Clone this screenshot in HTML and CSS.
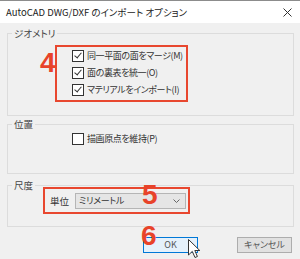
FILE: index.html
```html
<!DOCTYPE html>
<html lang="ja">
<head>
    <meta charset="UTF-8">
    <title>AutoCAD DWG/DXF のインポート オプション</title>
    <link rel="stylesheet" href="styles.css">
</head>
<body>
    <div class="titlebar">
        <span class="title">AutoCAD DWG/DXF のインポート オプション</span>
        <svg class="close" width="9" height="9" viewBox="0 0 9 9">
            <path d="M0.5 0.5 L8.5 8.5 M8.5 0.5 L0.5 8.5" stroke="#333" stroke-width="1"/>
        </svg>
    </div>

    <div class="main">
        <!-- Geometry -->
        <fieldset class="group group-geometry">
            <legend>ジオメトリ</legend>
            <div class="check-list">
                <label class="check"><span class="box checked"></span>同一平面の面をマージ(M)</label>
                <label class="check"><span class="box checked"></span>面の裏表を統一(O)</label>
                <label class="check"><span class="box checked"></span>マテリアルをインポート(I)</label>
            </div>
        </fieldset>

        <!-- Position -->
        <fieldset class="group group-position">
            <legend>位置</legend>
            <div class="check-list">
                <label class="check"><span class="box"></span>描画原点を維持(P)</label>
            </div>
        </fieldset>

        <!-- Scale -->
        <fieldset class="group group-scale">
            <legend>尺度</legend>
            <div class="unit-row">
                <span class="unit-label">単位</span>
                <div class="select">
                    <span>ミリメートル</span>
                    <svg width="7" height="4" viewBox="0 0 7 4">
                        <path d="M0.5 0.5 L3.5 3.5 L6.5 0.5" fill="none" stroke="#666" stroke-width="1"/>
                    </svg>
                </div>
            </div>
        </fieldset>

        <div class="buttons">
            <button class="btn btn-ok">OK</button>
            <button class="btn">キャンセル</button>
        </div>
    </div>

    <!-- annotations -->
    <div class="mark mark-box mark-box-1"></div>
    <div class="mark mark-num mark-num-4">4</div>
    <div class="mark mark-box mark-box-2"></div>
    <div class="mark mark-num mark-num-5">5</div>
    <div class="mark mark-num mark-num-6">6</div>

    <svg class="cursor" width="13" height="20" viewBox="0 0 13 20">
        <path d="M0.5 0.5 L0.5 16 L4.3 12.4 L7 18.5 L9.4 17.5 L6.8 11.5 L11.8 11.5 Z" fill="#fff" stroke="#333" stroke-width="1" stroke-linejoin="round"/>
    </svg>
</body>
</html>
```

FILE: styles.css
```css
body {
    margin: 0;
    width: 300px;
    height: 259px;
    overflow: hidden;
    position: relative;
    background-color: #f0f0f0;
    font-family: "Noto Sans CJK JP", "Liberation Sans", sans-serif;
    font-size: 9.5px;
    font-feature-settings: "palt";
    color: #333;
}
.titlebar {
    height: 22px;
    border-top: 1px solid #8c8c8c;
    background: #fff;
    display: flex;
    align-items: center;
    justify-content: space-between;
    padding: 0 8px 0 6px;
}
.title {
    font-size: 9.5px;
    color: #222;
}
.main {
    padding: 4px 6px 0 7px;
}
.group {
    margin: 0;
    padding: 0;
    border: 1px solid #dcdcdc;
    min-width: 0;
}
.group legend {
    margin-left: 4px;
    padding: 0 2px;
    line-height: 12px;
    color: #444;
}
.group-geometry {
    padding-top: 8px;
    padding-bottom: 17px;
}
.group-position {
    margin-top: 2px;
    padding-bottom: 26px;
}
.group-scale {
    margin-top: 5px;
    padding-top: 2px;
    padding-bottom: 17px;
}
.check-list {
    padding-left: 64px;
}
.check {
    display: flex;
    align-items: center;
    height: 17px;
    line-height: 17px;
    font-size: 9px;
    letter-spacing: -0.4px;
}
.box {
    width: 10px;
    height: 10px;
    border: 1px solid #333;
    background: #fff;
    margin-right: 3px;
    position: relative;
}
.box.checked::after {
    content: "";
    position: absolute;
    left: 3px;
    top: 0px;
    width: 3px;
    height: 6px;
    border: solid #333;
    border-width: 0 1px 1px 0;
    transform: rotate(40deg);
}
.unit-row {
    display: flex;
    align-items: center;
    padding-left: 42px;
}
.unit-label {
    width: 25px;
}
.select {
    width: 101px;
    height: 14px;
    border: 1px solid #b5b5b5;
    background: #e5e5e5;
    display: flex;
    align-items: center;
    justify-content: space-between;
    padding: 0 5px 0 3px;
    line-height: 14px;
    font-size: 9px;
    letter-spacing: -0.3px;
}
.buttons {
    display: flex;
    justify-content: flex-end;
    gap: 39px;
    margin-top: 10px;
    margin-right: 2px;
}
.btn {
    width: 55px;
    height: 16px;
    padding: 0;
    border: 1px solid #adadad;
    background: #e1e1e1;
    font-family: inherit;
    font-size: 9px;
    font-feature-settings: "palt";
    color: #555;
    line-height: 14px;
}
.btn-ok {
    border-color: #0078d7;
    background: #e5f1fb;
}
.mark {
    position: absolute;
}
.mark-box {
    border: 2px solid #e8472f;
}
.mark-box-1 {
    left: 55px;
    top: 45px;
    width: 129px;
    height: 53px;
}
.mark-box-2 {
    left: 43px;
    top: 187px;
    width: 143px;
    height: 23px;
}
.mark-num {
    font-family: "Liberation Sans", sans-serif;
    font-weight: bold;
    font-size: 28px;
    line-height: 1;
    color: #e8432a;
}
.mark-num-4 {
    left: 40px;
    top: 49px;
}
.mark-num-5 {
    left: 142px;
    top: 181px;
}
.mark-num-6 {
    left: 141px;
    top: 222px;
}
.cursor {
    position: absolute;
    left: 188px;
    top: 239px;
}
```
